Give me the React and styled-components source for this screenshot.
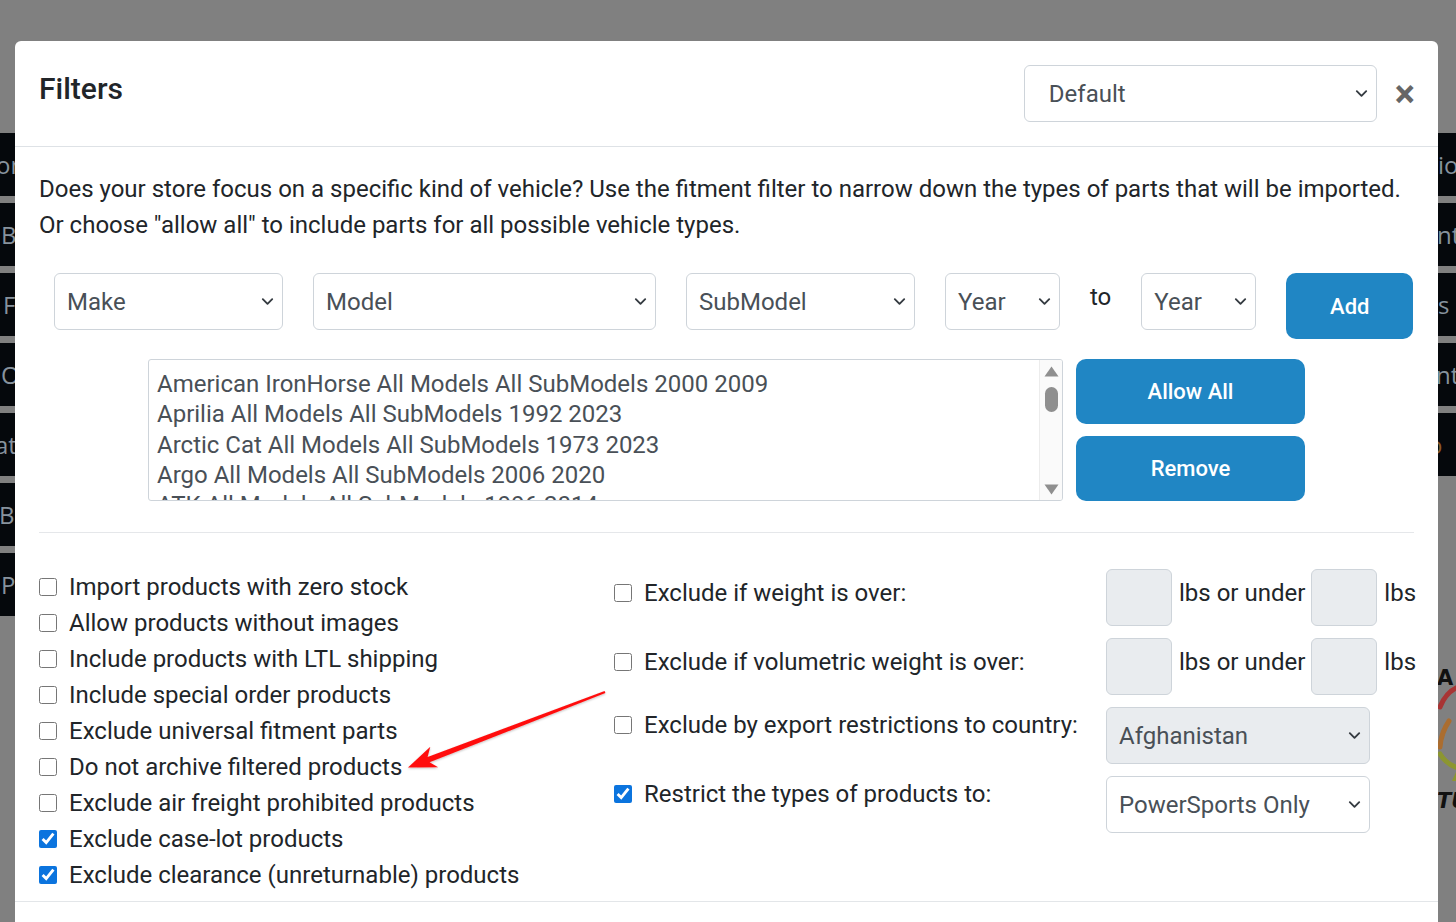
import React from "react";
import styled, { createGlobalStyle } from "styled-components";

const GlobalStyle = createGlobalStyle`
  html, body { margin: 0; padding: 0; }
  body {
    width: 1456px;
    height: 922px;
    overflow: hidden;
    background: #808080;
    font-family: Roboto, "Liberation Sans", Arial, sans-serif;
  }
  * { box-sizing: border-box; }
`;

const Page = styled.div`
  position: relative;
  width: 1456px;
  height: 922px;
  overflow: hidden;
  background: #808080;
  display: flex;
  justify-content: space-between;
`;

const Rail = styled.div`
  width: ${(p) => p.$w}px;
  padding-top: 133px;
  display: flex;
  flex-direction: column;
  gap: 7px;
  overflow: hidden;
`;

const NavBar = styled.div`
  height: 63px;
  flex: none;
  background: #05080c;
  color: ${(p) => p.$color || "#87929d"};
  font-family: "Open Sans", "DejaVu Sans", sans-serif;
  font-size: 24px;
  display: flex;
  align-items: center;
  white-space: nowrap;
  overflow: hidden;
  & > span {
    margin-left: ${(p) => p.$shift}px;
  }
`;

const LogoWrap = styled.div`
  margin-top: 177px;
  flex: none;
  line-height: 0;
`;

const Modal = styled.div`
  position: absolute;
  left: 15px;
  top: 41px;
  width: 1423px;
  height: 940px;
  background: #fff;
  border-radius: 6px;
  color: #212529;
`;

const Header = styled.div`
  display: flex;
  align-items: flex-start;
  justify-content: space-between;
  padding: 24px 23px 24px 24px;
  border-bottom: 1px solid #dee2e6;
`;

const Title = styled.h4`
  margin: 5px 0 0;
  font-size: 30px;
  font-weight: 500;
  line-height: 38px;
  color: #212529;
`;

const HeaderRight = styled.div`
  display: flex;
  align-items: center;
  gap: 18px;
`;

const CloseBtn = styled.button`
  border: 0;
  background: none;
  padding: 0;
  margin: 0;
  font-family: Roboto, sans-serif;
  font-size: 38px;
  font-weight: 700;
  line-height: 1;
  color: #666;
  cursor: pointer;
`;

const SelectBox = styled.div`
  width: ${(p) => p.$w}px;
  height: 57px;
  flex: none;
  display: flex;
  align-items: center;
  justify-content: space-between;
  padding: 0 7px 0 ${(p) => p.$pl || 12}px;
  border: 1px solid #ced4da;
  border-radius: 6px;
  background: ${(p) => (p.$disabled ? "#e9ecef" : "#fff")};
  font-size: 24px;
  color: #495057;
  white-space: nowrap;
`;

const Body = styled.div`
  padding: 24px 24px 8px;
  border-bottom: 1px solid #e3e6e9;
`;

const Intro = styled.p`
  margin: 0 0 30px;
  font-size: 24px;
  line-height: 36px;
`;

const FilterRow = styled.div`
  display: flex;
  align-items: flex-start;
  gap: 30px;
  padding-left: 15px;
`;

const ToText = styled.span`
  padding-top: 6px;
  font-size: 24px;
  line-height: 36px;
  color: #212529;
`;

const BlueButton = styled.button`
  width: ${(p) => p.$w}px;
  height: ${(p) => p.$h}px;
  flex: none;
  border: 0;
  border-radius: 10px;
  background: #2086c4;
  color: #fff;
  font-family: Roboto, sans-serif;
  font-size: 22px;
  font-weight: 500;
  cursor: pointer;
`;

const ListRow = styled.div`
  display: flex;
  gap: 13px;
  margin-top: 20px;
  padding-left: 109px;
`;

const ListBox = styled.div`
  width: 915px;
  height: 142px;
  border: 1px solid #ced4da;
  border-radius: 3px;
  display: flex;
  overflow: hidden;
`;

const Options = styled.div`
  flex: 1;
  padding: 9px 8px 0;
  overflow: hidden;
`;

const Option = styled.div`
  height: 30.33px;
  font-size: 24px;
  line-height: 30px;
  color: #495057;
  white-space: nowrap;
`;

const ScrollTrack = styled.div`
  width: 23px;
  flex: none;
  background: #fafafa;
  border-left: 1px solid #ececec;
  display: flex;
  flex-direction: column;
  align-items: center;
  padding: 6px 0 5px;
`;

const Thumb = styled.div`
  width: 13px;
  height: 25px;
  margin-top: 10px;
  border-radius: 7px;
  background: #8f8f8f;
`;

const Spacer = styled.div`
  flex: 1;
`;

const ButtonStack = styled.div`
  display: flex;
  flex-direction: column;
  gap: 12px;
`;

const Divider = styled.hr`
  margin: 31px 0 36px;
  border: 0;
  border-top: 1px solid #e5e7ea;
`;

const OptionsGrid = styled.div`
  display: grid;
  grid-template-columns: 575px 492px 1fr;
  align-items: start;
`;

const CheckList = styled.div`
  display: flex;
  flex-direction: column;
`;

const CheckLabel = styled.label`
  display: flex;
  gap: 12px;
  height: ${(p) => p.$h || 36}px;
  padding-top: ${(p) => p.$pt || 0}px;
  font-size: 24px;
  line-height: 36px;
  color: #212529;
  white-space: nowrap;
  align-items: ${(p) => (p.$top ? "flex-start" : "center")};
`;

const Box = styled.input.attrs({ type: "checkbox" })`
  width: 18px;
  height: 18px;
  margin: 0;
  flex: none;
  accent-color: #0b74de;
  ${(p) => (p.$top ? "margin-top: 9px;" : "")}
`;

const MidColumn = styled.div`
  display: flex;
  flex-direction: column;
  gap: 12px;
`;

const RightColumn = styled.div`
  display: flex;
  flex-direction: column;
  gap: 12px;
`;

const WeightRow = styled.div`
  display: flex;
  align-items: flex-start;
  gap: 6px;
  height: 57px;
  padding-left: 0;
`;

const WeightInput = styled.div`
  width: 66px;
  height: 57px;
  flex: none;
  border: 1px solid #ced4da;
  border-radius: 6px;
  background: #e9ecef;
  margin-right: ${(p) => p.$mr || 0}px;
`;

const UnitText = styled.span`
  padding-top: 6px;
  font-size: 24px;
  line-height: 36px;
  color: #212529;
  white-space: nowrap;
`;

const ArrowLayer = styled.svg`
  position: absolute;
  left: 0;
  top: 0;
  width: 1456px;
  height: 922px;
  pointer-events: none;
`;

function Chevron() {
  return (
    <svg width="15" height="15" viewBox="0 0 16 16" fill="none">
      <path d="M3 5.5l5 5 5-5" stroke="#343a40" strokeWidth="2" strokeLinecap="round" strokeLinejoin="round" />
    </svg>
  );
}

function Select({ w, pl, disabled, children }) {
  return (
    <SelectBox $w={w} $pl={pl} $disabled={disabled}>
      <span>{children}</span>
      <Chevron />
    </SelectBox>
  );
}

function Triangle({ up }) {
  return (
    <svg width="15" height="11" viewBox="0 0 15 11">
      <path d={up ? "M7.5 0.5 L14.5 10.5 L0.5 10.5 Z" : "M0.5 0.5 L14.5 0.5 L7.5 10.5 Z"} fill="#8f8f8f" />
    </svg>
  );
}

function Logo() {
  return (
    <svg width="18" height="150" viewBox="1438 660 18 150">
      <text x="1437" y="685" fontFamily="'DejaVu Sans', sans-serif" fontWeight="700" fontSize="21" fill="#111">A</text>
      <path d="M1440 707 Q1446 692 1458 687" stroke="#a83434" strokeWidth="5" fill="none" strokeLinecap="round" />
      <path d="M1449 721 Q1441 733 1440 747" stroke="#ab6d2f" strokeWidth="5" fill="none" strokeLinecap="round" />
      <path d="M1440 754 Q1446 764 1458 768" stroke="#8c9631" strokeWidth="5" fill="none" strokeLinecap="round" />
      <path d="M1452 781 L1456 772 L1459 781 Z" fill="#8c9631" />
      <text x="1437" y="808" fontFamily="'DejaVu Sans', sans-serif" fontWeight="700" fontStyle="italic" fontSize="21" fill="#111">TU</text>
    </svg>
  );
}

const leftNav = [
  { t: "on", s: -4 },
  { t: "B", s: 1 },
  { t: "F", s: 3 },
  { t: "O", s: 1 },
  { t: "at", s: -5 },
  { t: "Bu", s: -1 },
  { t: "P", s: 1 },
];

const rightNav = [
  { t: "io", s: 0 },
  { t: "nt", s: -1 },
  { t: "s", s: 0 },
  { t: "nt", s: -2 },
  { t: "o", s: -10, c: "#8a5a2a" },
];

const vehicles = [
  "American IronHorse All Models All SubModels 2000 2009",
  "Aprilia All Models All SubModels 1992 2023",
  "Arctic Cat All Models All SubModels 1973 2023",
  "Argo All Models All SubModels 2006 2020",
  "ATK All Models All SubModels 1996 2014",
];

const leftChecks = [
  ["Import products with zero stock", false],
  ["Allow products without images", false],
  ["Include products with LTL shipping", false],
  ["Include special order products", false],
  ["Exclude universal fitment parts", false],
  ["Do not archive filtered products", false],
  ["Exclude air freight prohibited products", false],
  ["Exclude case-lot products", true],
  ["Exclude clearance (unreturnable) products", true],
];

const midChecks = [
  ["Exclude if weight is over:", false, 6],
  ["Exclude if volumetric weight is over:", false, 6],
  ["Exclude by export restrictions to country:", false, 0],
  ["Restrict the types of products to:", true, 0],
];

function WeightLimit() {
  return (
    <WeightRow>
      <WeightInput $mr={1} />
      <UnitText>lbs or under</UnitText>
      <WeightInput $mr={1} />
      <UnitText>lbs</UnitText>
    </WeightRow>
  );
}

export default function App() {
  return (
    <>
      <GlobalStyle />
      <Page>
        <Rail $w={15}>
          {leftNav.map((n, i) => (
            <NavBar key={i} $shift={n.s}>
              <span>{n.t}</span>
            </NavBar>
          ))}
        </Rail>
        <Rail $w={18}>
          {rightNav.map((n, i) => (
            <NavBar key={i} $shift={n.s} $color={n.c}>
              <span>{n.t}</span>
            </NavBar>
          ))}
          <LogoWrap>
            <Logo />
          </LogoWrap>
        </Rail>

        <Modal>
          <Header>
            <Title>Filters</Title>
            <HeaderRight>
              <Select w={353} pl={24}>Default</Select>
              <CloseBtn aria-label="Close">×</CloseBtn>
            </HeaderRight>
          </Header>
          <Body>
            <Intro>
              Does your store focus on a specific kind of vehicle? Use the fitment filter to narrow down the types of parts that will be imported.
              <br />
              Or choose "allow all" to include parts for all possible vehicle types.
            </Intro>
            <FilterRow>
              <Select w={229}>Make</Select>
              <Select w={343}>Model</Select>
              <Select w={229}>SubModel</Select>
              <Select w={115}>Year</Select>
              <ToText>to</ToText>
              <Select w={115}>Year</Select>
              <BlueButton $w={127} $h={66}>Add</BlueButton>
            </FilterRow>
            <ListRow>
              <ListBox>
                <Options>
                  {vehicles.map((v) => (
                    <Option key={v}>{v}</Option>
                  ))}
                </Options>
                <ScrollTrack>
                  <Triangle up />
                  <Thumb />
                  <Spacer />
                  <Triangle />
                </ScrollTrack>
              </ListBox>
              <ButtonStack>
                <BlueButton $w={229} $h={65}>Allow All</BlueButton>
                <BlueButton $w={229} $h={65}>Remove</BlueButton>
              </ButtonStack>
            </ListRow>
            <Divider />
            <OptionsGrid>
              <CheckList>
                {leftChecks.map(([label, on]) => (
                  <CheckLabel key={label}>
                    <Box defaultChecked={on} />
                    {label}
                  </CheckLabel>
                ))}
              </CheckList>
              <MidColumn>
                {midChecks.map(([label, on, pt]) => (
                  <CheckLabel key={label} $h={57} $pt={pt} $top>
                    <Box defaultChecked={on} $top />
                    {label}
                  </CheckLabel>
                ))}
              </MidColumn>
              <RightColumn>
                <WeightLimit />
                <WeightLimit />
                <Select w={264} disabled>Afghanistan</Select>
                <Select w={264}>PowerSports Only</Select>
              </RightColumn>
            </OptionsGrid>
          </Body>
        </Modal>

        <ArrowLayer viewBox="0 0 1456 922">
          <defs>
            <filter id="arrowShadow" x="-10%" y="-10%" width="120%" height="130%">
              <feDropShadow dx="0" dy="1" stdDeviation="1" floodColor="#000" floodOpacity="0.25" />
            </filter>
          </defs>
          <polygon
            points="408,767.5 430.3,746.7 427.6,757 604.6,691.1 605.4,692.9 429.6,762.3 438.1,767.3"
            fill="#ff1010"
            filter="url(#arrowShadow)"
          />
        </ArrowLayer>
      </Page>
    </>
  );
}
